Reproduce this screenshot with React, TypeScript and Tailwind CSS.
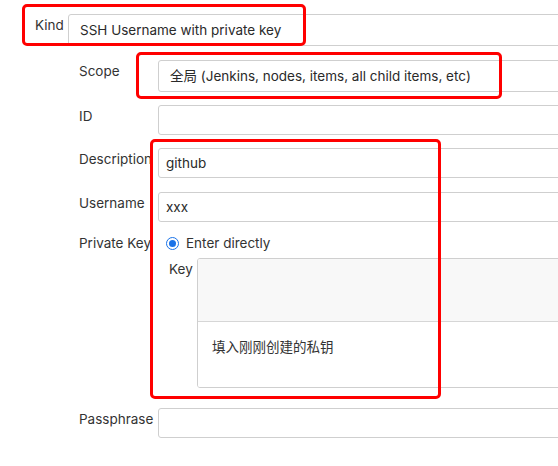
const font = "font-['Inter','Noto_Sans_CJK_SC',sans-serif]";

function Field({ label, value, select, mt }: { label: string; value?: string; select?: boolean; mt: string }) {
  return (
    <div className={`flex ${mt} pl-[79px]`}>
      <div className="w-[79px] shrink-0 pt-[1px] leading-5 text-[13.5px] text-[#333] whitespace-nowrap overflow-hidden">
        {label}
      </div>
      <div
        className={`w-[440px] shrink-0 border border-[#cfcfcf] rounded-[3px] bg-white flex items-center text-[13.5px] text-[#2a2a2a] ${
          select ? "h-[32px] px-[11px]" : "h-[30px] px-[7px]"
        }`}
      >
        {value}
      </div>
    </div>
  );
}

export default function App() {
  return (
    <div className={`relative w-[558px] h-[466px] overflow-hidden bg-white ${font}`}>
      <div className="pt-[14px]">
        {/* Kind */}
        <div className="flex pl-[35px]">
          <div className="w-[33px] shrink-0 pt-[1px] leading-5 text-[13.5px] text-[#333]">Kind</div>
          <div className="w-[520px] shrink-0 h-[32px] px-[11px] border border-[#cfcfcf] rounded-[3px] flex items-center text-[13.5px] text-[#2a2a2a]">
            SSH Username with private key
          </div>
        </div>

        <Field label="Scope" select mt="mt-[14px]" value="全局 (Jenkins, nodes, items, all child items, etc)" />
        <Field label="ID" mt="mt-[13px]" />
        <Field label="Description" mt="mt-[13px]" value="github" />
        <Field label="Username" mt="mt-[14px]" value="xxx" />

        {/* Private Key */}
        <div className="flex mt-[11px] pl-[79px]">
          <div className="w-[87px] shrink-0 leading-5 text-[13.5px] text-[#333] whitespace-nowrap overflow-hidden">
            Private Key
          </div>
          <div className="flex-1 min-w-0">
            <div className="flex items-center h-5">
              <span className="w-[13px] h-[13px] rounded-full border-[1.5px] border-[#1a73e8] bg-white flex items-center justify-center shrink-0">
                <span className="w-[7px] h-[7px] rounded-full bg-[#1a73e8]" />
              </span>
              <span className="ml-[7px] text-[13.5px] text-[#333] leading-5">Enter directly</span>
            </div>
            <div className="flex mt-[5px] ml-[3px]">
              <div className="w-[28px] shrink-0 pt-[1px] leading-5 text-[13.5px] text-[#333]">Key</div>
              <div className="w-[400px] shrink-0 h-[130px] border border-[#cfcfcf] rounded-[3px] flex flex-col overflow-hidden">
                <div className="h-[63px] bg-[#f8f8f8] border-b border-[#d6d6d6]" />
                <div className="flex-1 bg-white pl-[14px] pt-[15px] text-[13.5px] text-[#333] leading-5">
                  填入刚刚创建的私钥
                </div>
              </div>
            </div>
          </div>
        </div>

        <Field label="Passphrase" mt="mt-[20px]" />
      </div>

      {/* annotation boxes */}
      <div className="absolute left-[22px] top-[4px] w-[284px] h-[42px] border-[3px] border-[#f00] rounded-[5px]" />
      <div className="absolute left-[136px] top-[52px] w-[366px] h-[47px] border-[3px] border-[#f00] rounded-[5px]" />
      <div className="absolute left-[150px] top-[139px] w-[291px] h-[260px] border-[3px] border-[#f00] rounded-[5px]" />
    </div>
  );
}
